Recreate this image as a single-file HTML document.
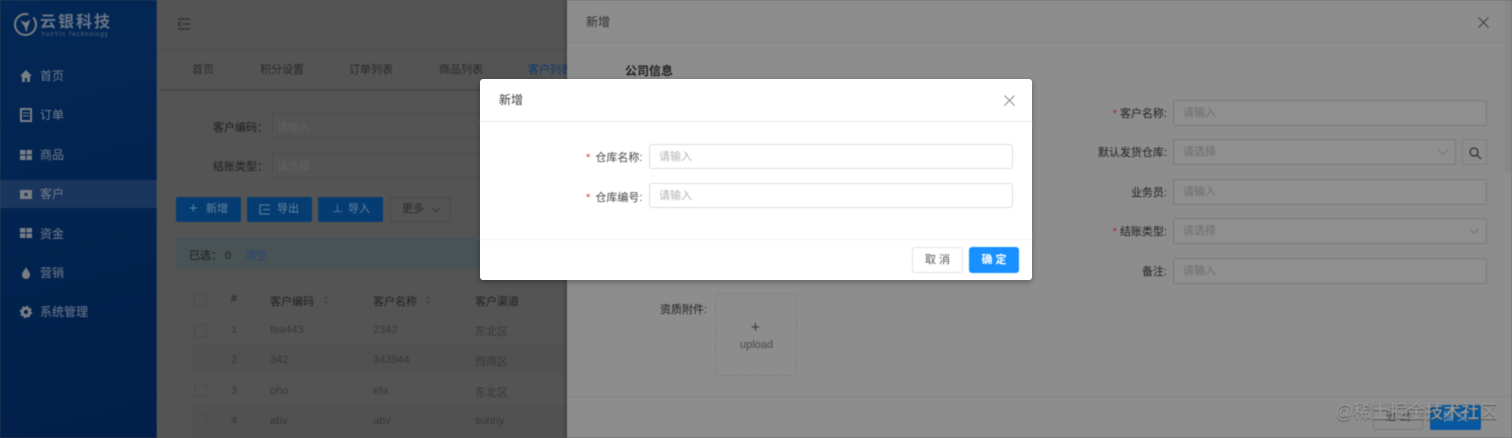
<!DOCTYPE html>
<html lang="zh"><head><meta charset="utf-8"><title>新增</title>
<style>
*{box-sizing:border-box}
html,body{margin:0;padding:0}
body{width:1512px;height:438px;overflow:hidden;position:relative;background:#545454;font-family:"Liberation Sans","Noto Sans CJK SC",sans-serif;font-size:11px;color:#2c2c2c}
.a{position:absolute;white-space:nowrap}
.soft{filter:blur(.55px)}
#side{left:0;top:0;width:157px;height:438px;background:linear-gradient(165deg,#032856 0%,#032451 45%,#021f4a 100%)}
.m{position:absolute;left:40px;font-size:12px;line-height:16px;color:#727c8a;white-space:nowrap}
.ic{position:absolute;left:19px}
.ph{color:#6e6e6e}
.btn{position:absolute;top:197px;height:25px;width:65px;background:#053d73;border-radius:2px;color:#65819c;line-height:25px}
.row{color:#383838;font-size:11px}
.cb{position:absolute;left:194px;width:13px;height:13px;border:1px solid #4c4c4c;border-radius:2px}
.di{position:absolute;left:1173px;width:314px;height:26px;border:1px solid #7a7a7a;border-radius:2px;background:#8f8f8f;color:#6e6e6e;padding-left:9px;line-height:25px;font-size:11px}
.dl{position:absolute;color:#222;font-size:11px;text-align:right;right:345px;white-space:nowrap}
.req{color:#a5233a}
.mi{position:absolute;left:649px;width:364px;height:25px;border:1px solid #dcdcdc;border-radius:3px;background:#fff;color:#b4b4b4;padding-left:9px;line-height:25px;font-size:11px}
</style></head><body>

<div id="side" class="a soft">
<svg class="a" style="left:13px;top:12px" width="26" height="26" viewBox="0 0 26 26"><circle cx="12.500" cy="12.500" r="10.500" fill="none" stroke="#7a7e80" stroke-width="2" stroke-dasharray="52 6"/><path d="M7.500 8.500l5 2 5-3-3 8-1 5-2-6z" fill="#7a7e80"/></svg>
<div class="a" style="left:40px;top:13px;font-size:16px;line-height:19px;font-weight:bold;letter-spacing:2px;color:#6a7587">云银科技</div>
<div class="a" style="left:41px;top:31px;font-size:6px;line-height:8px;letter-spacing:1px;color:#5a6a7f">YunYin Technology</div>

<svg class="ic" style="top:69px" width="14" height="14" viewBox="0 0 14 14"><path d="M7 1L1 7h2v6h3V9h2v4h3V7h2z" fill="#797e86"/></svg>
<div class="m" style="top:68px">首页</div>
<svg class="ic" style="top:108px" width="14" height="14" viewBox="0 0 14 14"><path d="M2 1h10v12H2z" fill="none" stroke="#797e86" stroke-width="2"/><path d="M4 5h6M4 8h6" stroke="#797e86"/></svg>
<div class="m" style="top:107px">订单</div>
<svg class="ic" style="top:148px" width="14" height="14" viewBox="0 0 14 14"><path d="M1 2h5.500v4.500H1zM7.500 2H13v4.500H7.500zM1 7.500h5.500V12H1zM7.500 7.500H13V12H7.500z" fill="#797e86"/></svg>
<div class="m" style="top:147px">商品</div>
<div class="a" style="left:0;top:180px;width:157px;height:28px;background:#1a365e"></div>
<svg class="ic" style="top:187px" width="14" height="14" viewBox="0 0 14 14"><path d="M1 3h12v9H1z" fill="#797e86"/><circle cx="7" cy="7.500" r="1.800" fill="#1a365e"/></svg>
<div class="m" style="top:186px">客户</div>
<svg class="ic" style="top:226px" width="14" height="14" viewBox="0 0 14 14"><path d="M1 2h5.500v4.500H1zM7.500 2H13v4.500H7.500zM1 7.500h5.500V12H1zM7.500 7.500H13V12H7.500z" fill="#797e86"/></svg>
<div class="m" style="top:226px">资金</div>
<svg class="ic" style="top:266px" width="14" height="14" viewBox="0 0 14 14"><path d="M7 1c1 3 4 4.500 4 8a4 4 0 0 1-8 0c0-3 3-5 4-8z" fill="#797e86"/></svg>
<div class="m" style="top:265px">营销</div>
<svg class="ic" style="top:305px" width="14" height="14" viewBox="0 0 14 14"><circle cx="7" cy="7" r="3.700" fill="none" stroke="#797e86" stroke-width="3"/><circle cx="7" cy="7" r="5.300" fill="none" stroke="#797e86" stroke-width="1.800" stroke-dasharray="2 2.160"/></svg>
<div class="m" style="top:304px">系统管理</div>
</div>

<div class="a soft" style="left:157px;top:0;width:410px;height:438px;background:#545454">
<svg class="a" style="left:20px;top:17px" width="14" height="14" viewBox="0 0 14 14"><path d="M1 2h12M6 7h7M1 12h12M4 4.500L1.500 7 4 9.500" fill="none" stroke="#232323" stroke-width="1"/></svg>
<div class="a" style="left:0;top:49px;width:410px;height:1px;background:#4a4a4a"></div>
<div class="a" style="left:3px;top:89px;width:407px;height:2px;background:#494949"></div>
</div>

<div class="soft">
<div class="a" style="left:191px;top:344px;width:376px;height:30px;background:#515151"></div>
<div class="a" style="left:191px;top:404px;width:376px;height:34px;background:#515151"></div>

<div class="a row" style="left:192px;top:61px;color:#2a2a2a">首页</div>
<div class="a row" style="left:260px;top:61px;color:#2a2a2a">积分设置</div>
<div class="a row" style="left:349px;top:61px;color:#2a2a2a">订单列表</div>
<div class="a row" style="left:439px;top:61px;color:#2a2a2a">商品列表</div>
<div class="a row" style="left:528px;top:61px;color:#0a3a6c">客户列表</div>

<div class="a row" style="left:213px;top:119px;color:#1e1e1e">客户编码：</div>
<div class="a" style="left:272px;top:113px;width:295px;height:25px;border:1px solid #4d4d4d;border-right:0"></div>
<div class="a ph" style="left:277px;top:119px;color:#636363">请输入</div>
<div class="a row" style="left:213px;top:158px;color:#1e1e1e">结账类型：</div>
<div class="a" style="left:272px;top:153px;width:295px;height:25px;border:1px solid #4d4d4d;border-right:0"></div>
<div class="a ph" style="left:277px;top:158px;color:#636363">请选择</div>

<div class="btn" style="left:176px"><span class="a" style="left:13px;top:-1px;font-size:15px">+</span><span class="a" style="left:30px">新增</span></div>
<div class="btn" style="left:247px"><svg class="a" style="left:12px;top:7px" width="12" height="11"><path d="M11 1H1v9h10M4 5.500h7" fill="none" stroke="#65819c"/></svg><span class="a" style="left:30px">导出</span></div>
<div class="btn" style="left:318px"><span class="a" style="left:14px;top:0;font-size:11px">⊥</span><span class="a" style="left:30px">导入</span></div>
<div class="a" style="left:390px;top:197px;width:61px;height:25px;border:1px solid #4b4b4b;border-radius:2px;line-height:23px;color:#2a2a2a"><span class="a" style="left:11px">更多</span><svg class="a" style="left:41px;top:9px" width="8" height="6"><path d="M.5 1L4 4.500 7.500 1" fill="none" stroke="#333"/></svg></div>

<div class="a" style="left:176px;top:238px;width:391px;height:31px;background:#495254;border:1px solid #44565a;border-radius:2px"></div>
<div class="a row" style="left:189px;top:247px;color:#1f1f1f">已选：&nbsp;0</div>
<div class="a row" style="left:245px;top:247px;color:#27467a">清空</div>

<div class="a cb" style="top:293px"></div>
<div class="a" style="left:231px;top:293px;color:#222">#</div>
<div class="a" style="left:270px;top:293px;color:#222">客户编码</div>
<div class="a" style="left:323px;top:295px;color:#444;font-size:6px;line-height:6px">▲<br>▼</div>
<div class="a" style="left:373px;top:293px;color:#222">客户名称</div>
<div class="a" style="left:425px;top:295px;color:#444;font-size:6px;line-height:6px">▲<br>▼</div>
<div class="a" style="left:475px;top:293px;color:#222">客户渠道</div>

<div class="a cb" style="top:324px"></div><div class="a row" style="left:231px;top:324px">1</div><div class="a row" style="left:270px;top:324px">fea443</div><div class="a row" style="left:373px;top:324px">2342</div><div class="a row" style="left:475px;top:323px">东北区</div>
<div class="a cb" style="top:353px"></div><div class="a row" style="left:231px;top:354px">2</div><div class="a row" style="left:270px;top:354px">342</div><div class="a row" style="left:373px;top:354px">343544</div><div class="a row" style="left:475px;top:353px">西南区</div>
<div class="a cb" style="top:384px"></div><div class="a row" style="left:231px;top:385px">3</div><div class="a row" style="left:270px;top:385px">oho</div><div class="a row" style="left:373px;top:385px">efa</div><div class="a row" style="left:475px;top:384px">东北区</div>
<div class="a cb" style="top:414px"></div><div class="a row" style="left:231px;top:415px">4</div><div class="a row" style="left:270px;top:415px">abv</div><div class="a row" style="left:373px;top:415px">abv</div><div class="a row" style="left:475px;top:415px">sunny</div>
</div>

<div class="a soft" style="left:567px;top:0;width:945px;height:438px;background:#8d8d8d;box-shadow:-2px 0 3px rgba(0,0,0,.2)">
<div class="a" style="left:19px;top:14px;font-size:12px;line-height:17px;color:#303030">新增</div>
<div class="a" style="left:0;top:42px;width:938px;height:1px;background:#858585"></div>
<div class="a" style="left:58px;top:63px;font-size:12px;line-height:17px;font-weight:bold;color:#1f1f1f">公司信息</div>
<svg class="a" style="left:911px;top:17px" width="11" height="11"><path d="M.5.5l10 10M10.500.5l-10 10" stroke="#3d3d3d"/></svg>
<div class="a" style="left:938px;top:0;width:7px;height:172px;background:#878787"></div>
</div>

<div class="soft">
<div class="dl" style="top:105px"><span class="req">* </span>客户名称:</div>
<div class="di" style="top:100px">请输入</div>
<div class="dl" style="top:144px">默认发货仓库:</div>
<div class="di" style="top:139px;width:283px">请选择<svg class="a" style="left:264px;top:9px" width="10" height="7"><path d="M.5 1L5 5.500 9.500 1" fill="none" stroke="#777"/></svg></div>
<div class="a" style="left:1462px;top:139px;width:25px;height:26px;border:1px solid #7d7d7d;border-radius:2px"><svg class="a" style="left:6px;top:7px" width="13" height="13"><circle cx="5" cy="5" r="4" fill="none" stroke="#2d2d2d" stroke-width="1.200"/><path d="M8 8l4 4" stroke="#2d2d2d" stroke-width="1.200"/></svg></div>
<div class="dl" style="top:184px">业务员:</div>
<div class="di" style="top:179px">请输入</div>
<div class="dl" style="top:223px"><span class="req">* </span>结账类型:</div>
<div class="di" style="top:218px">请选择<svg class="a" style="left:295px;top:9px" width="10" height="7"><path d="M.5 1L5 5.500 9.500 1" fill="none" stroke="#777"/></svg></div>
<div class="dl" style="top:263px">备注:</div>
<div class="di" style="top:258px">请输入</div>

<div class="a" style="left:660px;top:301px;color:#222">资质附件:</div>
<div class="a" style="left:715px;top:293px;width:82px;height:83px;border:1px dashed #7d7d7d;border-radius:3px"></div>
<div class="a" style="left:751px;top:320px;font-size:15px;line-height:15px;color:#333">+</div>
<div class="a" style="left:740px;top:338px;font-size:11px;line-height:14px;color:#4a4a4a">upload</div>

<div class="a" style="left:567px;top:396px;width:945px;height:1px;background:#828282"></div>
<div class="a" style="left:1373px;top:405px;width:50px;height:25px;border:1px solid #7b7b7b;border-radius:2px;text-align:center;line-height:23px;color:#333">退 出</div>
<div class="a" style="left:1430px;top:405px;width:51px;height:25px;background:#07589e;border-radius:2px;text-align:center;line-height:25px;color:#8fa9c2">提 交</div>
<div class="a" style="left:1335px;top:400px;font-size:18px;line-height:24px;color:#a0a0a0;text-shadow:0 1px 1px #4c4c4c">@稀土掘金技术社区</div>
</div>

<div class="a" style="left:480px;top:79px;width:552px;height:201px;background:#fff;border-radius:3px;box-shadow:0 2px 6px rgba(0,0,0,.3)"></div>
<div class="soft">
<div class="a" style="left:499px;top:92px;font-size:12px;line-height:17px;color:#3a3a3a">新增</div>
<svg class="a" style="left:1004px;top:95px" width="11" height="11"><path d="M.5.5l10 10M10.500.5l-10 10" stroke="#8a8a8a"/></svg>
<div class="a" style="left:480px;top:121px;width:552px;height:1px;background:#ececec"></div>
<div class="a" style="left:586px;top:149px;color:#444"><span style="color:#e33;margin-right:2px">*&nbsp;</span>仓库名称:</div>
<div class="mi" style="top:144px">请输入</div>
<div class="a" style="left:586px;top:189px;color:#444"><span style="color:#e33;margin-right:2px">*&nbsp;</span>仓库编号:</div>
<div class="mi" style="top:183px">请输入</div>
<div class="a" style="left:480px;top:239px;width:552px;height:1px;background:#f2f2f2"></div>
<div class="a" style="left:912px;top:247px;width:51px;height:26px;border:1px solid #e2e2e2;border-radius:3px;text-align:center;line-height:24px;color:#555">取 消</div>
<div class="a" style="left:969px;top:247px;width:50px;height:26px;background:#1890ff;border-radius:3px;text-align:center;line-height:26px;color:#fff;font-weight:bold">确 定</div>
</div>
</body></html>
